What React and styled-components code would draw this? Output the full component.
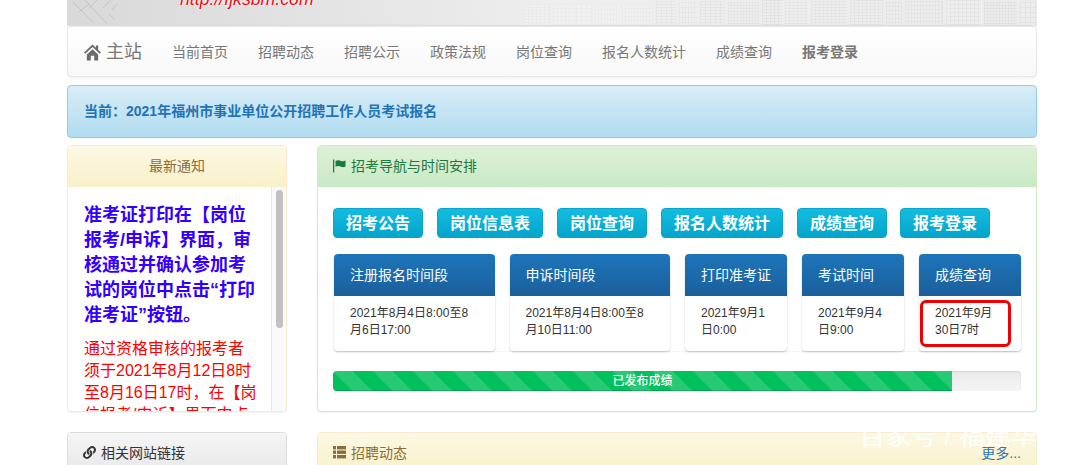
import React from 'react';
import styled, { createGlobalStyle } from 'styled-components';
import { FaLink } from 'react-icons/fa';

const Global = createGlobalStyle`
  html, body { margin: 0; padding: 0; background: #fff; overflow: hidden; height: 465px; }
  body { font-family: "Liberation Sans", "Noto Sans CJK SC", sans-serif; font-size: 14px; line-height: 20px; color: #333; }
  * { box-sizing: border-box; }
`;

const Page = styled.div`
  position: relative;
  width: 970px;
  height: 465px;
  margin-left: 67px;
  overflow: hidden;
`;

const Banner = styled.div`
  display: flex;
  height: 26px;
  overflow: hidden;
  background: linear-gradient(90deg, #d9d9d9 0%, #e3e3e3 25%, #eeeeee 50%, #ececec 100%);
  border-bottom: 1px solid #e4e4e4;
`;

const Sketch = styled.svg`
  flex: none;
  width: 70px;
  height: 25px;
  filter: blur(.5px);
`;

const SiteUrl = styled.div`
  flex: none;
  width: 134px;
  height: 24px;
  margin: -13px 0 0 43px;
  font-size: 17.7px;
  line-height: 24px;
  font-style: italic;
  color: #ee0a12;
  white-space: nowrap;
  text-shadow: 0 0 2px #fff, 0 0 2px #fff;
`;

const Skyline = styled.svg`
  flex: none;
  width: 513px;
  height: 25px;
  margin-left: auto;
  filter: blur(.6px);
`;

const Navbar = styled.nav`
  display: flex;
  align-items: center;
  height: 51px;
  padding-left: 16px;
  background: linear-gradient(#ffffff, #f8f8f8);
  border: 1px solid #e7e7e7;
  border-radius: 4px;
  box-shadow: inset 0 1px 0 rgba(255,255,255,.15), 0 1px 5px rgba(0,0,0,.075);
`;

const Brand = styled.a`
  display: flex;
  align-items: center;
  gap: 5px;
  width: 58px;
  margin-right: 30px;
  font-size: 18px;
  color: #777;
  white-space: nowrap;
`;

const NavLinks = styled.div`
  display: flex;
  gap: 30px;
`;

const NavLink = styled.a`
  font-size: 14px;
  color: #777;
  font-weight: ${p => (p.$strong ? 700 : 400)};
  white-space: nowrap;
`;

const Alert = styled.div`
  display: flex;
  align-items: center;
  height: 53px;
  margin-top: 8px;
  padding: 0 0 2px 16px;
  background: linear-gradient(#d9edf7, #b0dcf1);
  border: 1px solid #8fcdea;
  border-radius: 4px;
  color: #1f73b5;
  font-weight: 700;
  font-size: 14px;
`;

const Columns = styled.div`
  display: flex;
  gap: 30px;
  margin-top: 7px;
`;

const Side = styled.div`
  flex: none;
  width: 220px;
`;

const Main = styled.div`
  flex: none;
  width: 720px;
`;

const tones = {
  warning: { border: '#faebcc', from: '#fcf8e3', to: '#f9f1ca', color: '#8a6d3b' },
  success: { border: '#d6e9c6', from: '#dff0d8', to: '#c8eac4', color: '#1b7a3d' },
  plain: { border: '#dddddd', from: '#f5f5f5', to: '#e8e8e8', color: '#333333' },
};

const Panel = styled.section`
  border: 1px solid ${p => tones[p.$tone].border};
  border-radius: 4px;
  background: #fff;
  box-shadow: 0 1px 1px rgba(0,0,0,.05);
  height: ${p => p.$height}px;
  margin-bottom: 20px;
  overflow: hidden;
`;

const PanelHead = styled.div`
  display: flex;
  align-items: center;
  justify-content: ${p => (p.$center ? 'center' : 'flex-start')};
  gap: 5px;
  height: 41px;
  padding: 0 15px 2px;
  font-size: 14px;
  color: ${p => tones[p.$tone].color};
  background: linear-gradient(${p => tones[p.$tone].from}, ${p => tones[p.$tone].to});
`;

const More = styled.a`
  margin-left: auto;
  color: #2a78b8;
  font-size: 14px;
`;

const NoticeBody = styled.div`
  display: flex;
  height: 224px;
`;

const NoticeText = styled.div`
  flex: 1;
  min-width: 0;
  padding: 16px 13px 0 16px;
  overflow: hidden;
`;

const ScrollTrack = styled.div`
  flex: none;
  width: 15px;
  padding: 3px 3px 0 4px;
  background: #fafafa;
  border-left: 1px solid #e8e8e8;
`;

const ScrollThumb = styled.div`
  height: 138px;
  background: #c1c1c1;
  border-radius: 4px;
`;

const BlueNotice = styled.p`
  margin: 0 0 10px;
  font-size: 18px;
  line-height: 25px;
  font-weight: 700;
  color: #3300ff;
`;

const RedNotice = styled.p`
  margin: 0;
  font-size: 16px;
  line-height: 22px;
  color: #ff0000;
`;

const MainBody = styled.div`
  padding: 21px 15px 0;
`;

const Buttons = styled.div`
  display: flex;
  gap: 14px;
`;

const QuickButton = styled.a`
  display: flex;
  align-items: center;
  height: 30px;
  padding: 2px 12px 0;
  font-size: 16px;
  font-weight: 700;
  color: #fff;
  background: linear-gradient(#14bce0, #04a4cb);
  border: 1px solid #0aa5cc;
  border-radius: 4px;
  white-space: nowrap;
  &:last-child { margin-left: -1px; }
`;

const Schedule = styled.div`
  display: grid;
  grid-template-columns: 160.5px 160.5px 102px 102px 102px;
  gap: 15px;
  margin: 16px 0 0 1px;
  border-radius: 4px;
  box-shadow: 0 1px 1px rgba(0,0,0,.05);
`;

const ScheduleCard = styled.div`
  position: relative;
  height: 97px;
  border-radius: 4px;
  background: #fff;
  box-shadow: 0 1px 2px rgba(0,0,0,.22);
`;

const ScheduleHead = styled.div`
  display: flex;
  align-items: center;
  height: 42px;
  padding: 0 16px;
  border-radius: 4px 4px 0 0;
  background: linear-gradient(#1d75b9, #1b5f9c);
  color: #fff;
  font-size: 14px;
`;

const ScheduleBody = styled.div`
  padding: 9px 18px 0 16px;
  font-size: 12px;
  line-height: 17px;
  color: #333;
`;

const Highlight = styled.div`
  position: absolute;
  left: 1px;
  top: 46px;
  width: 91px;
  height: 47px;
  border: 3px solid #f00000;
  border-radius: 6px;
`;

const Progress = styled.div`
  margin-top: 20px;
  height: 20px;
  background: linear-gradient(#ebebeb, #f5f5f5);
  border-radius: 4px;
  overflow: hidden;
  box-shadow: inset 0 1px 2px rgba(0,0,0,.1);
`;

const ProgressFill = styled.div`
  display: flex;
  align-items: center;
  justify-content: center;
  height: 100%;
  color: #fff;
  font-size: 12px;
  font-weight: 500;
  background-color: #00c15c;
  background-image: linear-gradient(45deg, rgba(255,255,255,.15) 25%, transparent 25%, transparent 50%, rgba(255,255,255,.15) 50%, rgba(255,255,255,.15) 75%, transparent 75%, transparent);
  background-size: 40px 40px;
  box-shadow: inset 0 -1px 0 rgba(0,0,0,.15);
`;

const Watermark = styled.div`
  position: absolute;
  left: 792px;
  top: 420px;
  font-size: 26px;
  line-height: 32px;
  color: rgba(255,255,255,.92);
  white-space: nowrap;
`;

const nav = ['当前首页', '招聘动态', '招聘公示', '政策法规', '岗位查询', '报名人数统计', '成绩查询'];
const quick = ['招考公告', '岗位信息表', '岗位查询', '报名人数统计', '成绩查询', '报考登录'];
const schedule = [
  ['注册报名时间段', '2021年8月4日8:00至8月6日17:00'],
  ['申诉时间段', '2021年8月4日8:00至8月10日11:00'],
  ['打印准考证', '2021年9月1日0:00'],
  ['考试时间', '2021年9月4日9:00'],
  ['成绩查询', '2021年9月30日7时', true],
];

const HomeIcon = () => (
  <svg width="18" height="18" viewBox="0 0 18 18" fill="#6b6b6b">
    <path d="M9 1 L0 9.5 L1.3 10.9 L9 3.8 L16.7 10.9 L18 9.5 L15 6.7 V2 H12.6 V4.4 Z" />
    <path d="M3 11.6 L9 6 L15 11.6 V18 H10.8 V13 H7.2 V18 H3 Z" />
  </svg>
);

const FlagIcon = () => (
  <svg width="13" height="14" viewBox="0 0 13 14" fill="currentColor">
    <rect x="0" y="0.5" width="1.2" height="13" />
    <path d="M2.5 2 C4.5 1 6 1.2 8 2 C9.5 2.6 11 2.4 12.5 1.6 V7.4 C11 8.2 9.5 8.4 8 7.8 C6 7 4.5 6.8 2.5 7.8 Z" />
  </svg>
);

const ListIcon = () => (
  <svg width="13" height="13" viewBox="0 0 13 13" fill="currentColor">
    {[0, 4.5, 9].map(y => (
      <g key={y}>
        <rect x="0" y={y} width="3" height="3.4" />
        <rect x="4" y={y} width="9" height="3.4" />
      </g>
    ))}
  </svg>
);

function buildSkyline() {
  const out = [];
  let seed = 7;
  const rnd = () => {
    seed = (seed * 9301 + 49297) % 233280;
    return seed / 233280;
  };
  let x = 0;
  while (x < 513) {
    const w = 16 + Math.floor(rnd() * 26);
    const gapX = 3 + Math.floor(rnd() * 3);
    const gapY = 3 + Math.floor(rnd() * 3);
    const top = x < 130 ? 4 : Math.floor(rnd() * 3);
    const dark = x < 130 ? 0.035 : 0.07 + rnd() * 0.05;
    out.push(<rect key={`b${x}`} x={x} y={top} width={w - 2} height={25 - top} fill={`rgba(0,0,0,${dark * 0.35})`} />);
    for (let yy = top + 1; yy < 25; yy += gapY) {
      for (let xx = x + 1; xx < x + w - 3; xx += gapX) {
        out.push(<rect key={`${xx}-${yy}`} x={xx} y={yy} width={gapX - 1} height={gapY - 1} fill={`rgba(255,255,255,${0.25 + dark})`} />);
      }
    }
    x += w + 1;
  }
  return out;
}

export default function App() {
  return (
    <Page>
      <Global />
      <Banner>
        <Sketch viewBox="0 0 70 25" fill="none" stroke="rgba(150,150,150,.3)" strokeWidth="1">
          <path d="M6 2 L26 22 M18 0 L40 24 M30 0 L22 8 M44 0 L36 8 M50 4 L45 10 M12 12 L22 4 M42 14 L48 20" />
        </Sketch>
        <SiteUrl>http://fjksbm.com</SiteUrl>
        <Skyline viewBox="0 0 513 25">{buildSkyline()}</Skyline>
      </Banner>

      <Navbar>
        <Brand>
          <HomeIcon />
          主站
        </Brand>
        <NavLinks>
          {nav.map(n => <NavLink key={n}>{n}</NavLink>)}
          <NavLink $strong>报考登录</NavLink>
        </NavLinks>
      </Navbar>

      <Alert>{'当前\uFF1A2021年福州市事业单位公开招聘工作人员考试报名'}</Alert>

      <Columns>
        <Side>
          <Panel $tone="warning" $height={267}>
            <PanelHead $tone="warning" $center>最新通知</PanelHead>
            <NoticeBody>
              <NoticeText>
                <BlueNotice>{'准考证打印在【岗位报考/申诉】界面\uFF0C审核通过并确认参加考试的岗位中点击“打印准考证”按钮。'}</BlueNotice>
                <RedNotice>{'通过资格审核的报考者须于2021年8月12日8时至8月16日17时\uFF0C在【岗位报考/申诉】界面中点'}</RedNotice>
              </NoticeText>
              <ScrollTrack>
                <ScrollThumb />
              </ScrollTrack>
            </NoticeBody>
          </Panel>
          <Panel $tone="plain" $height={41}>
            <PanelHead $tone="plain">
              <FaLink size={13} />
              相关网站链接
            </PanelHead>
          </Panel>
        </Side>

        <Main>
          <Panel $tone="success" $height={267}>
            <PanelHead $tone="success">
              <FlagIcon />
              招考导航与时间安排
            </PanelHead>
            <MainBody>
              <Buttons>
                {quick.map(q => <QuickButton key={q}>{q}</QuickButton>)}
              </Buttons>
              <Schedule>
                {schedule.map(([title, time, marked]) => (
                  <ScheduleCard key={title}>
                    <ScheduleHead>{title}</ScheduleHead>
                    <ScheduleBody>{time}</ScheduleBody>
                    {marked && <Highlight />}
                  </ScheduleCard>
                ))}
              </Schedule>
              <Progress>
                <ProgressFill style={{ width: '90%' }}>已发布成绩</ProgressFill>
              </Progress>
            </MainBody>
          </Panel>
          <Panel $tone="warning" $height={41}>
            <PanelHead $tone="warning">
              <ListIcon />
              招聘动态
              <More>更多...</More>
            </PanelHead>
          </Panel>
        </Main>
      </Columns>
      <Watermark>百家号 / 福建华</Watermark>
    </Page>
  );
}
